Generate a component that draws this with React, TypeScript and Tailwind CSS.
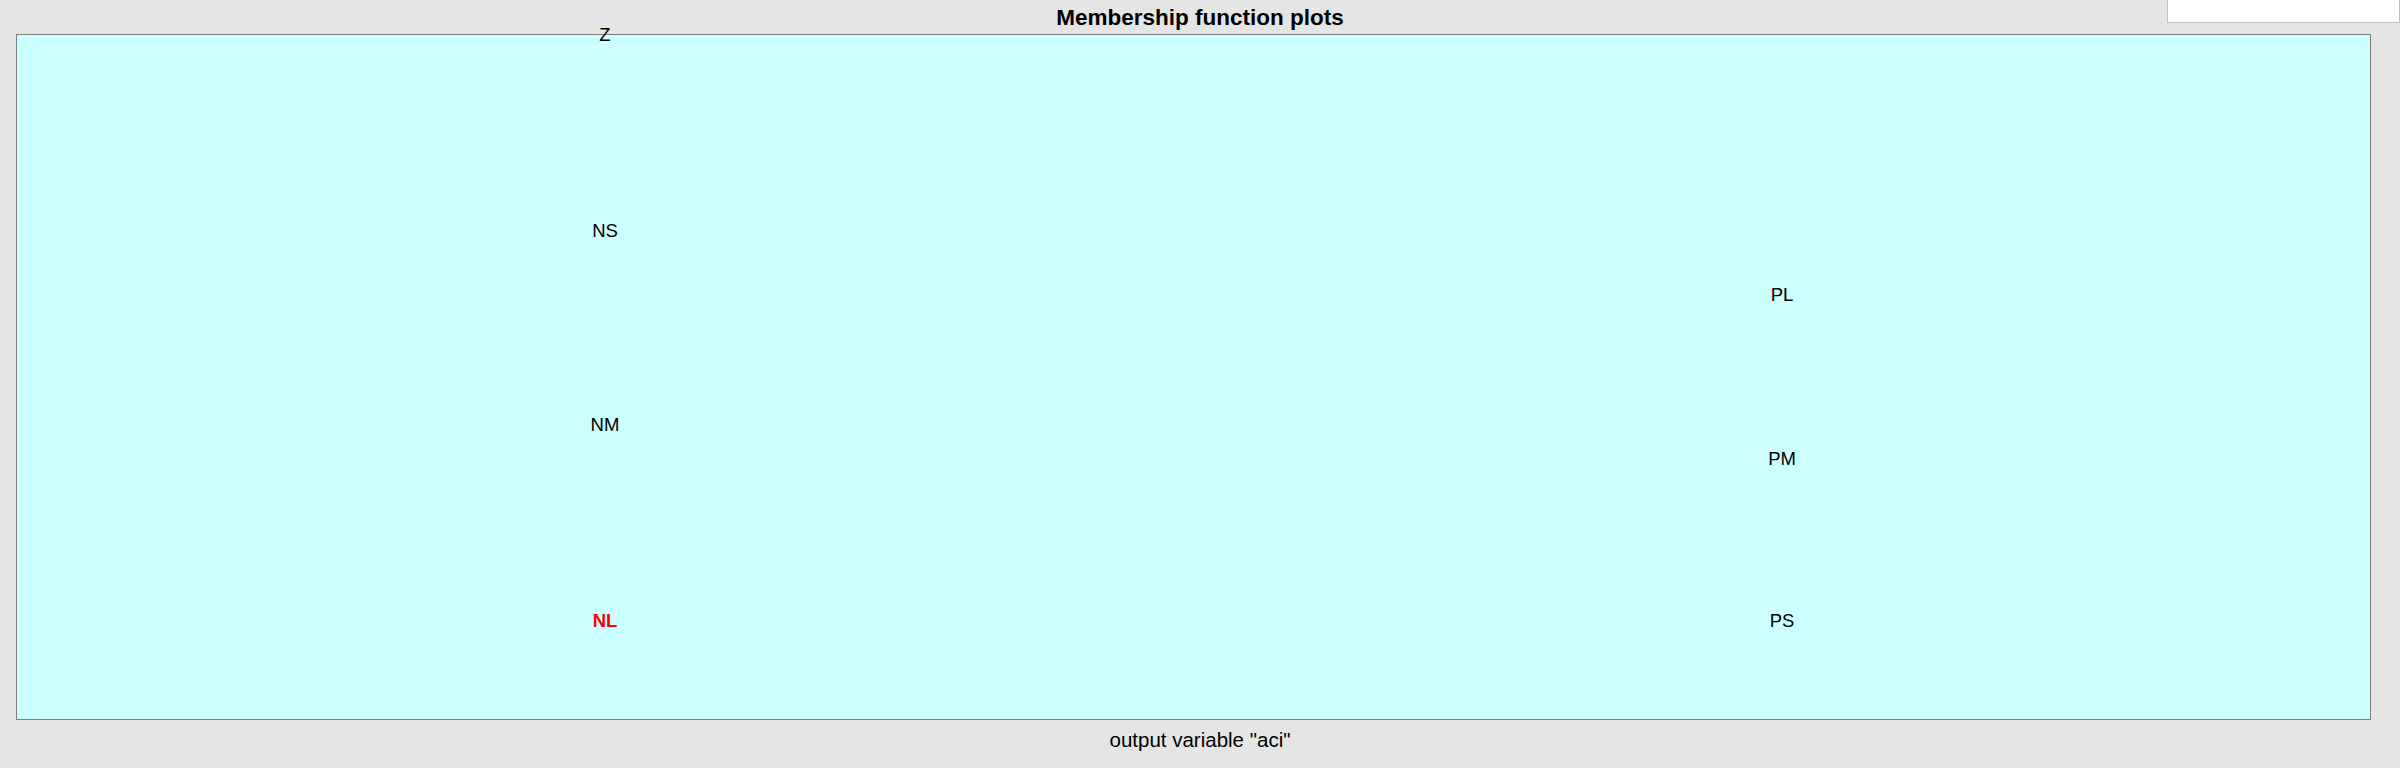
import React from "react";

type MF_LABEL = {
  name: string;
  x: number;
  y: number;
  active?: boolean;
};

// label spots inside the plot area (relative to its inner edge)
const labels: MF_LABEL[] = [
  { name: "Z", x: 588, y: -9 },
  { name: "NS", x: 588, y: 187 },
  { name: "NM", x: 588, y: 381 },
  { name: "NL", x: 588, y: 577, active: true },
  { name: "PL", x: 1765, y: 251 },
  { name: "PM", x: 1765, y: 415 },
  { name: "PS", x: 1765, y: 577 },
];

function App() {
  return (
    <div className="relative w-[2400px] h-[768px] overflow-hidden bg-[#e5e5e5] font-['Liberation_Sans',Arial,sans-serif] text-black">
      <div className="absolute top-0 right-0 w-[233px] h-[23px] bg-white border border-t-0 border-[#c0c0c0]" />

      <div className="flex flex-col px-[16px]">
        <h1 className="h-[34px] pt-[7px] text-center text-[22.5px] leading-[22px] font-bold">
          Membership function plots
        </h1>

        <div className="relative w-[2355px] h-[686px] bg-[#ccffff] border border-[#7f7f7f]">
          {labels.map((item) => (
            <span
              key={item.name}
              className={`absolute -translate-x-1/2 text-[18.5px] leading-none whitespace-nowrap ${
                item.active ? "font-bold text-[#ff0000]" : "text-black"
              }`}
              style={{ left: item.x, top: item.y }}
            >
              {item.name}
            </span>
          ))}
        </div>

        <p className="mt-[10px] text-center text-[20.5px] leading-none">
          output variable "aci"
        </p>
      </div>
    </div>
  );
}

export default App;
